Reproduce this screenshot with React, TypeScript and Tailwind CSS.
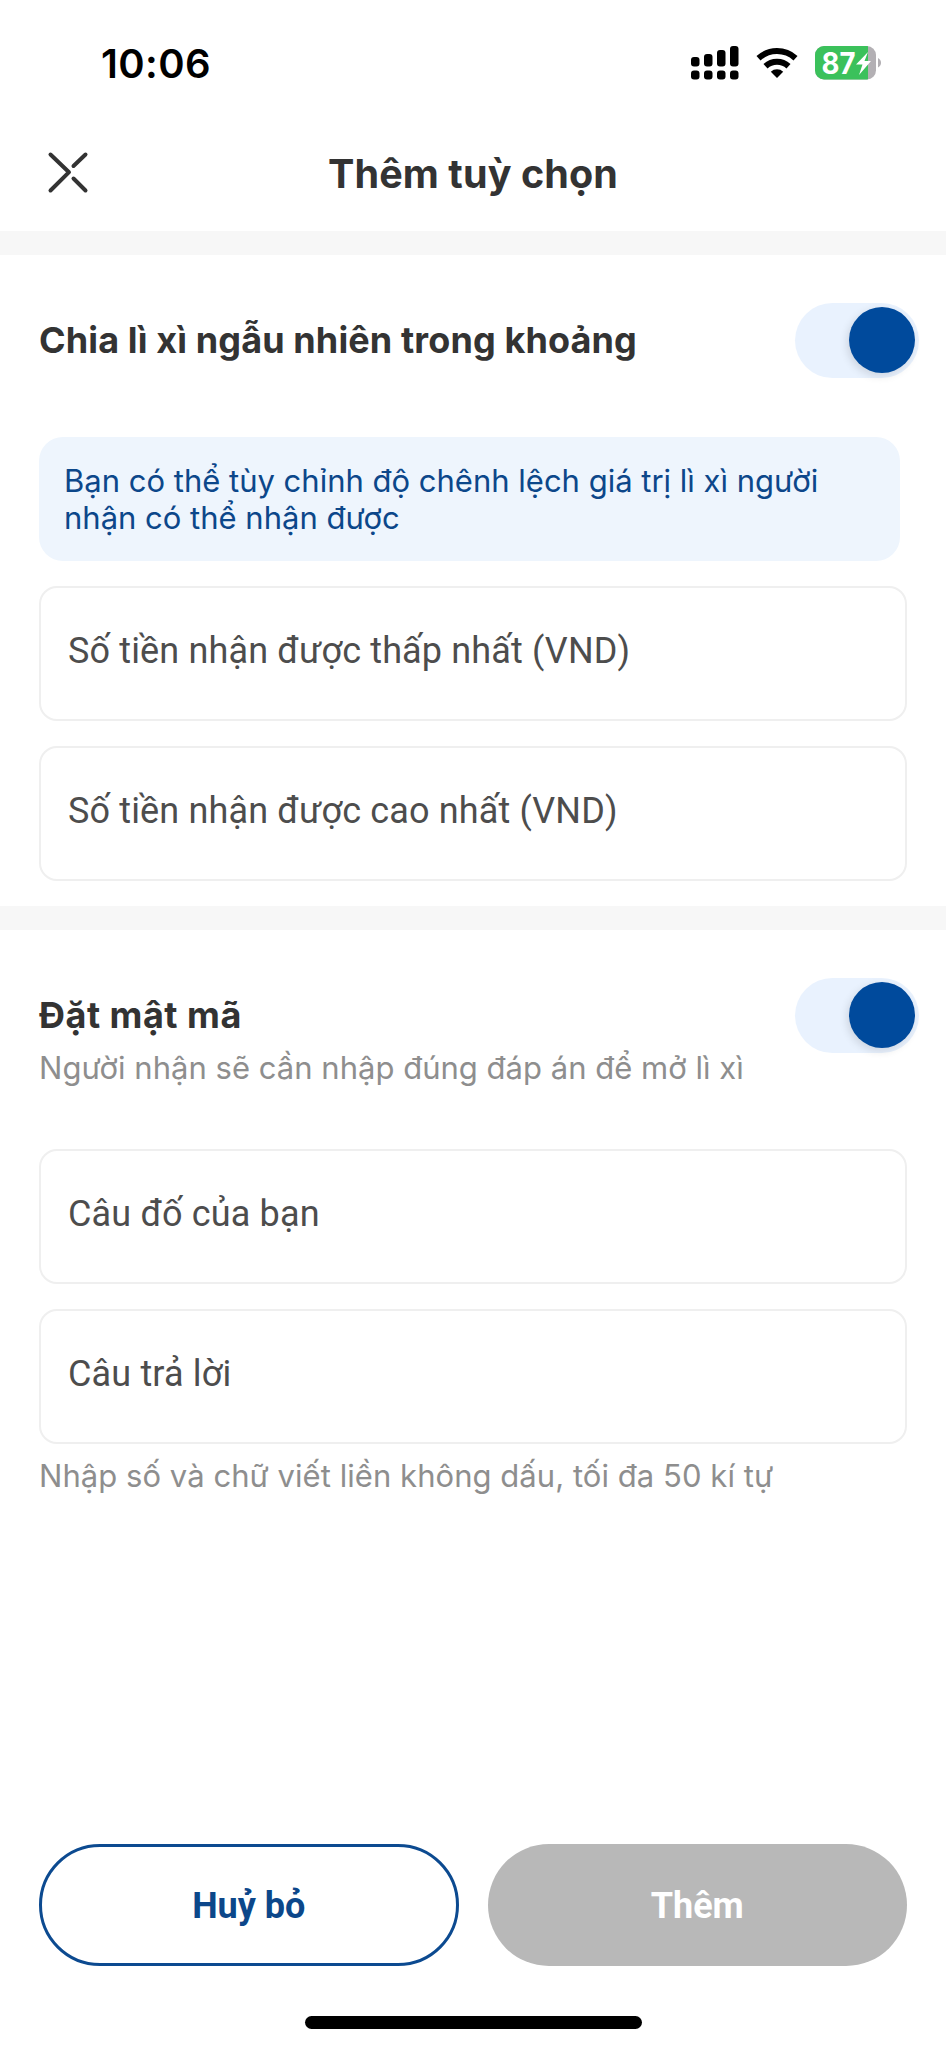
import { useState } from "react";

const StatusBar = () => (
  <div className="flex h-32 items-start justify-between pt-[40px] pr-[63px] pl-[101px]">
    <span className="text-[40px] leading-[48px] font-semibold tracking-[0.4px] text-black">10:06</span>
    <div className="flex h-[46px] items-center">
      {/* Dual SIM signal */}
      <svg width="48" height="34" viewBox="0 0 48 34" fill="#000">
        <rect x="0" y="11" width="8.5" height="9.5" rx="3" />
        <rect x="13" y="8" width="8.5" height="12.5" rx="3" />
        <rect x="26" y="4" width="8.5" height="16.5" rx="3" />
        <rect x="39" y="0" width="8.5" height="20.5" rx="3" />
        <rect x="0" y="24.5" width="8.5" height="9" rx="3" />
        <rect x="13" y="24.5" width="8.5" height="9" rx="3" />
        <rect x="26" y="24.5" width="8.5" height="9" rx="3" />
        <rect x="39" y="24.5" width="8.5" height="9" rx="3" />
      </svg>
      <svg className="ml-[17px]" width="42" height="32" viewBox="0 0 42 32" fill="none" stroke="#000" strokeWidth="6">
        <path d="M2.5 11.2a27.5 27.5 0 0 1 37 0" />
        <path d="M9.5 19.3a17 17 0 0 1 23 0" />
        <path d="M21 31l-6.2-6.2a9 9 0 0 1 12.4 0z" fill="#000" stroke="none" />
      </svg>
      <svg className="ml-[17px]" width="68" height="34" viewBox="0 0 68 34">
        <defs>
          <clipPath id="battery">
            <rect width="61" height="33.5" rx="9" />
          </clipPath>
        </defs>
        <g clipPath="url(#battery)">
          <rect width="61" height="34" fill="#b3b0b4" />
          <rect width="53" height="34" fill="#3bc15b" />
        </g>
        <path d="M63 12c4 2 4 7.5 0 9.5z" fill="#b3b0b4" />
        <text x="6.5" y="27.5" fontSize="30" fontWeight="700" fill="#fff" textLength="34" lengthAdjust="spacingAndGlyphs">
          87
        </text>
        <path d="M53 6L41 18.5h6.5L44 29 56 15h-6.5z" fill="#fff" />
      </svg>
    </div>
  </div>
);

const Toggle = ({ on, onChange }: { on: boolean; onChange: () => void }) => (
  <button
    role="switch"
    aria-checked={on}
    onClick={onChange}
    className={`flex h-[75px] w-[124px] shrink-0 items-center rounded-full bg-[#e9f2fe] px-[4px] pb-px ${
      on ? "justify-end" : "justify-start"
    }`}
  >
    <span className="size-[66px] rounded-full bg-[#004a9c] shadow-[-2px_3px_8px_rgba(0,0,0,0.12)]" />
  </button>
);

const Field = ({ label }: { label: string }) => (
  <input
    placeholder={label}
    aria-label={label}
    className="block h-[135px] w-full rounded-[18px] border-2 border-[#efefef] bg-white px-[27px] pb-[6px] font-[Roboto,sans-serif] text-[36px] tracking-[0.15px] text-[#4d4d4d] outline-none placeholder:text-[#4d4d4d] placeholder:opacity-100"
  />
);

const App = () => {
  const [randomSplit, setRandomSplit] = useState(true);
  const [passcode, setPasscode] = useState(true);

  return (
    <div className="flex h-[2048px] w-[946px] flex-col overflow-hidden bg-white font-[Inter,sans-serif] text-[#333]">
      <StatusBar />

      <header className="grid h-[103px] grid-cols-[1fr_auto_1fr] items-start px-[46px]">
        <button aria-label="Đóng" className="mt-[22px] w-[44px]">
          <svg width="44" height="44" viewBox="0 0 44 44" fill="none" stroke="#333" strokeWidth="4" strokeLinecap="round" strokeLinejoin="round">
            <path d="M4.5 4.5L23 22.2 4.5 40.5" />
            <path d="M39.5 4.5L27.5 16M27.5 28.5L39.5 40.5" />
          </svg>
        </button>
        <h1 className="mt-[21px] text-[39.5px] leading-[50px] font-bold tracking-[0.1px]">Thêm tuỳ chọn</h1>
      </header>

      <div className="h-6 shrink-0 bg-[#f7f7f7]" />

      <section className="px-[39px]">
        <div className="mt-[48px] -mr-[12px] flex items-center justify-between">
          <h2 className="pb-[2px] text-[36px] leading-[44px] font-bold tracking-[0.12px]">
            Chia lì xì ngẫu nhiên trong khoảng
          </h2>
          <Toggle on={randomSplit} onChange={() => setRandomSplit(!randomSplit)} />
        </div>
        <p className="mt-[59px] mr-[7px] h-[124px] rounded-[24px] bg-[#eef5fd] px-[25px] pt-[25px] text-[31px] leading-[37px] text-[#0c478a]">
          Bạn có thể tùy chỉnh độ chênh lệch giá trị lì xì người
          <br />
          nhận có thể nhận được
        </p>
        <div className="mt-[25px] flex flex-col gap-[25px]">
          <Field label="Số tiền nhận được thấp nhất (VND)" />
          <Field label="Số tiền nhận được cao nhất (VND)" />
        </div>
      </section>

      <div className="mt-[25px] h-6 shrink-0 bg-[#f7f7f7]" />

      <section className="px-[39px]">
        <div className="-mr-[12px] mt-[48px] flex h-[124px] items-start justify-between">
          <div>
            <h2 className="mt-[15px] text-[36px] leading-[44px] font-bold tracking-[0.5px]">Đặt mật mã</h2>
            <p className="mt-[12px] text-[31px] leading-[38px] tracking-[0.02px] text-[#8e8e8e]">
              Người nhận sẽ cần nhập đúng đáp án để mở lì xì
            </p>
          </div>
          <Toggle on={passcode} onChange={() => setPasscode(!passcode)} />
        </div>
        <div className="mt-[47px] flex flex-col gap-[25px]">
          <Field label="Câu đố của bạn" />
          <Field label="Câu trả lời" />
        </div>
        <p className="mt-[13px] text-[31px] leading-[38px] tracking-[0.05px] text-[#8e8e8e]">
          Nhập số và chữ viết liền không dấu, tối đa 50 kí tự
        </p>
      </section>

      <footer className="mt-auto flex flex-col items-center px-[39px] pb-[19px]">
        <div className="grid w-full grid-cols-2 gap-[29px] font-[Roboto,sans-serif] text-[36px] font-bold">
          <button className="h-[122px] rounded-full border-3 border-[#0c4a90] pt-[2px] text-[#0c478a]">Huỷ bỏ</button>
          <button className="h-[122px] rounded-full bg-[#b8b8b8] pt-[2px] text-white">Thêm</button>
        </div>
        <div className="mt-[50px] h-[13px] w-[337px] rounded-full bg-black" />
      </footer>
    </div>
  );
};

export default App;
